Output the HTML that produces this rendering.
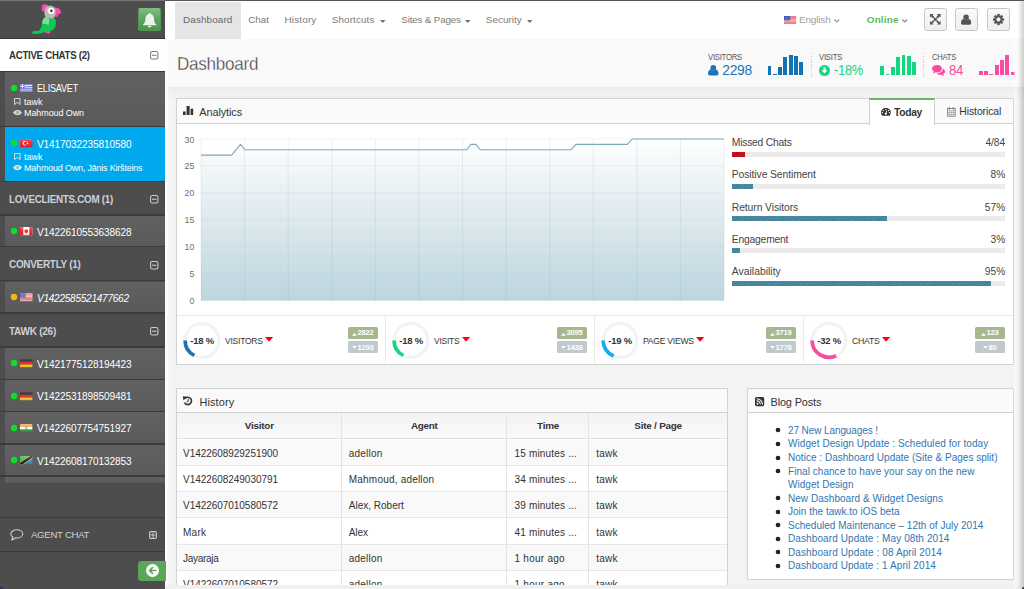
<!DOCTYPE html><html><head><meta charset="utf-8"><title>Dashboard</title><style>

*{margin:0;padding:0;box-sizing:border-box}
html,body{width:1024px;height:589px;overflow:hidden;background:#f2f3f3;font-family:"Liberation Sans",sans-serif;}
body{position:relative}
.a{position:absolute}
.t{position:absolute;white-space:nowrap;line-height:1;font-family:"Liberation Sans",sans-serif;}
svg{position:absolute;overflow:visible}

</style></head><body>
<div class="a" style="left:165px;top:0px;width:859px;height:39px;background:#fff"></div>
<div class="a" style="left:165px;top:88px;width:859px;height:501px;background:#f2f3f3"></div>
<div class="a" style="left:165px;top:39px;width:859px;height:49px;background:#f9f9fa;border-bottom:1px solid #e9e9ee"></div>
<div class="a" style="left:165px;top:88px;width:859px;height:12px;background:linear-gradient(#eeeeef,#f1f2f2)"></div>
<div class="a" style="left:165px;top:39px;width:9px;height:550px;background:linear-gradient(90deg,rgba(255,255,255,1) 0,rgba(255,255,255,.9) 1.6px,rgba(255,255,255,.2) 3.5px,rgba(255,255,255,0) 9px)"></div>
<div class="a" style="left:0px;top:0px;width:165.3px;height:589px;background:#4d4d4d"></div>
<div class="a" style="left:0px;top:0px;width:165px;height:38px;background:#4d4d4d"></div>
<div class="a" style="left:0px;top:37.6px;width:165px;height:1.2px;background:#333"></div>
<div class="a" style="left:0px;top:39px;width:165px;height:32px;background:#fff"></div>
<div class="a" style="left:0px;top:71px;width:165px;height:1px;background:#3a3a3a"></div>
<svg style="left:149.8px;top:51.3px" width="8.5" height="8.5" viewBox="0 0 8 8"><rect x=".55" y=".55" width="6.9" height="6.9" rx="1.6" fill="none" stroke="#7c7c7c" stroke-width="1"/><rect x="1.9" y="3.5" width="4.2" height="1" fill="#7c7c7c"/></svg>
<div class="a" style="left:4.5px;top:72px;width:160.5px;height:54px;background:linear-gradient(#616161,#5a5a5a)"></div>
<div class="a" style="left:0px;top:125.6px;width:165px;height:1.4px;background:#3b3b3b"></div>
<div class="a" style="left:4.5px;top:127px;width:160.5px;height:53.6px;background:#00a9ee"></div>
<div class="a" style="left:0px;top:180.5px;width:165px;height:1.4px;background:#3b3b3b"></div>
<div class="a" style="left:0px;top:182px;width:165px;height:32.5px;background:#4d4d4d"></div>
<div class="a" style="left:0px;top:214.3px;width:165px;height:1.4px;background:#3b3b3b"></div>
<div class="a" style="left:4.5px;top:215.7px;width:160.5px;height:30.5px;background:linear-gradient(#616161,#5a5a5a)"></div>
<div class="a" style="left:0px;top:246px;width:165px;height:1.4px;background:#3b3b3b"></div>
<div class="a" style="left:0px;top:247.5px;width:165px;height:32.5px;background:#4d4d4d"></div>
<div class="a" style="left:0px;top:280px;width:165px;height:1.4px;background:#3b3b3b"></div>
<div class="a" style="left:4.5px;top:281.5px;width:160.5px;height:30.8px;background:linear-gradient(#616161,#5a5a5a)"></div>
<div class="a" style="left:0px;top:312.3px;width:165px;height:1.4px;background:#3b3b3b"></div>
<div class="a" style="left:0px;top:313.6px;width:165px;height:32.5px;background:#4d4d4d"></div>
<div class="a" style="left:0px;top:346.2px;width:165px;height:1.4px;background:#3b3b3b"></div>
<div class="a" style="left:4.5px;top:347.6px;width:160.5px;height:31px;background:linear-gradient(#616161,#5a5a5a)"></div>
<div class="a" style="left:0px;top:378.6px;width:165px;height:1.4px;background:#3b3b3b"></div>
<div class="a" style="left:4.5px;top:380px;width:160.5px;height:30.8px;background:linear-gradient(#616161,#5a5a5a)"></div>
<div class="a" style="left:0px;top:410.8px;width:165px;height:1.4px;background:#3b3b3b"></div>
<div class="a" style="left:4.5px;top:412.2px;width:160.5px;height:31px;background:linear-gradient(#616161,#5a5a5a)"></div>
<div class="a" style="left:0px;top:443.2px;width:165px;height:1.4px;background:#3b3b3b"></div>
<div class="a" style="left:4.5px;top:444.6px;width:160.5px;height:30.6px;background:linear-gradient(#616161,#5a5a5a)"></div>
<div class="a" style="left:0px;top:475.2px;width:165px;height:1.4px;background:#3b3b3b"></div>
<div class="a" style="left:4.5px;top:476.6px;width:160.5px;height:6.2px;background:linear-gradient(#616161,#5a5a5a)"></div>
<div class="a" style="left:0px;top:516.6px;width:165px;height:1.2px;background:#3b3b3b"></div>
<div class="a" style="left:0px;top:550.6px;width:165px;height:1.2px;background:#3b3b3b"></div>
<svg style="left:149.8px;top:195.3px" width="8.5" height="8.5" viewBox="0 0 8 8"><rect x=".55" y=".55" width="6.9" height="6.9" rx="1.6" fill="none" stroke="#ccc" stroke-width="1"/><rect x="1.9" y="3.5" width="4.2" height="1" fill="#ccc"/></svg>
<svg style="left:149.8px;top:260.8px" width="8.5" height="8.5" viewBox="0 0 8 8"><rect x=".55" y=".55" width="6.9" height="6.9" rx="1.6" fill="none" stroke="#ccc" stroke-width="1"/><rect x="1.9" y="3.5" width="4.2" height="1" fill="#ccc"/></svg>
<svg style="left:149.8px;top:327.3px" width="8.5" height="8.5" viewBox="0 0 8 8"><rect x=".55" y=".55" width="6.9" height="6.9" rx="1.6" fill="none" stroke="#ccc" stroke-width="1"/><rect x="1.9" y="3.5" width="4.2" height="1" fill="#ccc"/></svg>
<svg width="0" height="0" style="left:0;top:0"><defs><linearGradient id="fgl" x1="0" y1="0" x2="0" y2="1"><stop offset="0" stop-color="#fff" stop-opacity=".28"/><stop offset=".5" stop-color="#fff" stop-opacity=".05"/><stop offset="1" stop-color="#000" stop-opacity=".12"/></linearGradient></defs></svg>
<svg style="left:9.5px;top:83.9px" width="8" height="8" viewBox="0 0 8 8"><circle cx="4" cy="4" r="3.2" fill="#10dc2e"/></svg>
<svg style="left:20px;top:83.80px;border-radius:1px" width="12.6" height="8.4" viewBox="0 0 12.6 8.4"><defs><clipPath id="fc880gr"><rect width="12.6" height="8.4" rx="1"/></clipPath></defs><g clip-path="url(#fc880gr)"><rect width="12.6" height="8.4" fill="#3f4fc0"/><rect y="0.93" width="12.6" height="0.93" fill="#fff"/><rect y="2.79" width="12.6" height="0.93" fill="#fff"/><rect y="4.65" width="12.6" height="0.93" fill="#fff"/><rect y="6.51" width="12.6" height="0.93" fill="#fff"/><rect width="4.7" height="4.65" fill="#3f4fc0"/><rect x="1.85" width="1" height="4.65" fill="#fff"/><rect y="1.85" width="4.7" height="1" fill="#fff"/><rect width="12.6" height="8.4" fill="url(#fgl)"/></g></svg>
<svg style="left:14px;top:97.5px" width="6.6" height="7.4" viewBox="0 0 6.6 7.4"><path d="M.55 .55 H6.05 V6.6 L3.3 4.3 L.55 6.6 Z" fill="none" stroke="#e8e8e8" stroke-width=".9" stroke-linejoin="round"/></svg>
<svg style="left:13px;top:110.4px" width="9" height="5.2" viewBox="0 0 9 5.2"><path d="M0 2.6 C1.6 .2 3.2 0 4.5 0 C5.8 0 7.4 .2 9 2.6 C7.4 5 5.8 5.2 4.5 5.2 C3.2 5.2 1.6 5 0 2.6Z" fill="#e8e8e8" fill-opacity=".88"/><circle cx="4.5" cy="2.5" r="1.5" fill="#6a6a6a" opacity=".6"/><circle cx="4" cy="2" r=".6" fill="#e8e8e8"/></svg>
<svg style="left:9.5px;top:139.2px" width="8" height="8" viewBox="0 0 8 8"><circle cx="4" cy="4" r="3.2" fill="#10dc2e"/></svg>
<svg style="left:20px;top:139.10px;border-radius:1px" width="12.6" height="8.4" viewBox="0 0 12.6 8.4"><defs><clipPath id="fc1433tr"><rect width="12.6" height="8.4" rx="1"/></clipPath></defs><g clip-path="url(#fc1433tr)"><rect width="12.6" height="8.4" fill="#e8222b"/><circle cx="5" cy="4.2" r="2.2" fill="#fff"/><circle cx="5.6" cy="4.2" r="1.75" fill="#e8222b"/><circle cx="7.6" cy="4.2" r=".8" fill="#fff"/><rect width="12.6" height="8.4" fill="url(#fgl)"/></g></svg>
<svg style="left:14px;top:152.6px" width="6.6" height="7.4" viewBox="0 0 6.6 7.4"><path d="M.55 .55 H6.05 V6.6 L3.3 4.3 L.55 6.6 Z" fill="none" stroke="#e8e8e8" stroke-width=".9" stroke-linejoin="round"/></svg>
<svg style="left:13px;top:165.3px" width="9" height="5.2" viewBox="0 0 9 5.2"><path d="M0 2.6 C1.6 .2 3.2 0 4.5 0 C5.8 0 7.4 .2 9 2.6 C7.4 5 5.8 5.2 4.5 5.2 C3.2 5.2 1.6 5 0 2.6Z" fill="#f2fbff" fill-opacity=".88"/><circle cx="4.5" cy="2.5" r="1.5" fill="#6a6a6a" opacity=".6"/><circle cx="4" cy="2" r=".6" fill="#f2fbff"/></svg>
<svg style="left:9.5px;top:227.2px" width="8" height="8" viewBox="0 0 8 8"><circle cx="4" cy="4" r="3.2" fill="#10dc2e"/></svg>
<svg style="left:20px;top:227.10px;border-radius:1px" width="12.6" height="8.4" viewBox="0 0 12.6 8.4"><defs><clipPath id="fc2313ca"><rect width="12.6" height="8.4" rx="1"/></clipPath></defs><g clip-path="url(#fc2313ca)"><rect width="12.6" height="8.4" fill="#fff"/><rect width="3.3" height="8.4" fill="#e8222b"/><rect x="9.3" width="3.3" height="8.4" fill="#e8222b"/><path d="M6.3 1.6 L7.1 3.1 L8.3 2.8 L7.8 4.6 L8.6 5 L7 5.7 L6.6 5.7 L6.6 6.9 L6 6.9 L6 5.7 L5.6 5.7 L4 5 L4.8 4.6 L4.3 2.8 L5.5 3.1 Z" fill="#e8222b"/><rect width="12.6" height="8.4" fill="url(#fgl)"/></g></svg>
<svg style="left:9.5px;top:293.3px" width="8" height="8" viewBox="0 0 8 8"><circle cx="4" cy="4" r="3.2" fill="#f5b811"/></svg>
<svg style="left:20px;top:293.30px;border-radius:1px" width="12.6" height="8.4" viewBox="0 0 12.6 8.4"><defs><clipPath id="fc2975us"><rect width="12.6" height="8.4" rx="1"/></clipPath></defs><g clip-path="url(#fc2975us)"><rect width="12.6" height="8.4" fill="#fff"/><rect y="0.00" width="12.6" height="0.646" fill="#e0303a"/><rect y="1.29" width="12.6" height="0.646" fill="#e0303a"/><rect y="2.58" width="12.6" height="0.646" fill="#e0303a"/><rect y="3.88" width="12.6" height="0.646" fill="#e0303a"/><rect y="5.17" width="12.6" height="0.646" fill="#e0303a"/><rect y="6.46" width="12.6" height="0.646" fill="#e0303a"/><rect y="7.75" width="12.6" height="0.646" fill="#e0303a"/><rect width="5.6" height="4.5" fill="#3c50b5"/><g fill="#fff" opacity=".8"><circle cx="1.2" cy="1.1" r=".35"/><circle cx="2.8" cy="1.1" r=".35"/><circle cx="4.4" cy="1.1" r=".35"/><circle cx="2" cy="2.25" r=".35"/><circle cx="3.6" cy="2.25" r=".35"/><circle cx="1.2" cy="3.4" r=".35"/><circle cx="2.8" cy="3.4" r=".35"/><circle cx="4.4" cy="3.4" r=".35"/></g><rect width="12.6" height="8.4" fill="url(#fgl)"/></g></svg>
<svg style="left:9.5px;top:359.2px" width="8" height="8" viewBox="0 0 8 8"><circle cx="4" cy="4" r="3.2" fill="#10dc2e"/></svg>
<svg style="left:20px;top:359.10px;border-radius:1px" width="12.6" height="8.4" viewBox="0 0 12.6 8.4"><defs><clipPath id="fc3633de"><rect width="12.6" height="8.4" rx="1"/></clipPath></defs><g clip-path="url(#fc3633de)"><rect width="12.6" height="2.8" fill="#0c0c0c"/><rect y="2.8" width="12.6" height="2.8" fill="#e3202a"/><rect y="5.6" width="12.6" height="2.8" fill="#f7cf1c"/><rect width="12.6" height="8.4" fill="url(#fgl)"/></g></svg>
<svg style="left:9.5px;top:391.6px" width="8" height="8" viewBox="0 0 8 8"><circle cx="4" cy="4" r="3.2" fill="#10dc2e"/></svg>
<svg style="left:20px;top:391.60px;border-radius:1px" width="12.6" height="8.4" viewBox="0 0 12.6 8.4"><defs><clipPath id="fc3958de"><rect width="12.6" height="8.4" rx="1"/></clipPath></defs><g clip-path="url(#fc3958de)"><rect width="12.6" height="2.8" fill="#0c0c0c"/><rect y="2.8" width="12.6" height="2.8" fill="#e3202a"/><rect y="5.6" width="12.6" height="2.8" fill="#f7cf1c"/><rect width="12.6" height="8.4" fill="url(#fgl)"/></g></svg>
<svg style="left:9.5px;top:423.7px" width="8" height="8" viewBox="0 0 8 8"><circle cx="4" cy="4" r="3.2" fill="#10dc2e"/></svg>
<svg style="left:20px;top:423.60px;border-radius:1px" width="12.6" height="8.4" viewBox="0 0 12.6 8.4"><defs><clipPath id="fc4278in"><rect width="12.6" height="8.4" rx="1"/></clipPath></defs><g clip-path="url(#fc4278in)"><rect width="12.6" height="2.8" fill="#f7a032"/><rect y="2.8" width="12.6" height="2.8" fill="#fff"/><rect y="5.6" width="12.6" height="2.8" fill="#2e9a3a"/><circle cx="6.3" cy="4.2" r="1" fill="none" stroke="#33409a" stroke-width=".45"/><rect width="12.6" height="8.4" fill="url(#fgl)"/></g></svg>
<svg style="left:9.5px;top:456.2px" width="8" height="8" viewBox="0 0 8 8"><circle cx="4" cy="4" r="3.2" fill="#10dc2e"/></svg>
<svg style="left:20px;top:456.10px;border-radius:1px" width="12.6" height="8.4" viewBox="0 0 12.6 8.4"><defs><clipPath id="fc4603tz"><rect width="12.6" height="8.4" rx="1"/></clipPath></defs><g clip-path="url(#fc4603tz)"><rect width="12.6" height="8.4" fill="#2a8ee0"/><path d="M0 0 H12.6 L0 8.4Z" fill="#2fb84a"/><path d="M9.2 0 H12.6 V2.3 L3.4 8.4 H0 V6.1Z" fill="#f7d11e"/><path d="M10.2 0 H12.6 V1.6 L2.4 8.4 H0 V6.8Z" fill="#222"/><rect width="12.6" height="8.4" fill="url(#fgl)"/></g></svg>
<svg style="left:9.5px;top:528.5px" width="13.5" height="12" viewBox="0 0 13.5 12"><path d="M6.9 .8 C10.2 .8 12.7 2.6 12.7 4.9 C12.7 7.2 10.2 9 6.9 9 C6.3 9 5.8 8.95 5.3 8.85 C4.4 9.9 3.2 10.6 1.6 10.9 C2.4 10.1 2.8 9.2 2.9 8.1 C1.6 7.35 .8 6.2 .8 4.9 C.8 2.6 3.6 .8 6.9 .8Z" fill="none" stroke="#cfcfcf" stroke-width="1.1" stroke-linejoin="round"/></svg>
<svg style="left:149.3px;top:530.5px" width="8" height="8" viewBox="0 0 8 8"><rect x=".6" y=".6" width="6.8" height="6.8" rx="1.4" fill="none" stroke="#ccc" stroke-width="1.1"/><rect x="1.6" y="3.5" width="4.8" height="1" fill="#ccc"/><rect x="3.5" y="1.6" width="1" height="4.8" fill="#ccc"/></svg>
<div class="a" style="left:138px;top:560.5px;width:27.5px;height:20.2px;background:#5aa65a;border-radius:3.5px 0 0 3.5px"></div>
<svg style="left:145.7px;top:564.2px" width="13" height="13" viewBox="0 0 13 13"><circle cx="6.5" cy="6.5" r="6.5" fill="#fff"/><path d="M6.4 2.6 L2.5 6.5 L6.4 10.4 L7.5 9.3 L5.55 7.35 H10.3 V5.65 H5.55 L7.5 3.7Z" fill="#5aa65a"/></svg>
<div class="a" style="left:138.4px;top:8.1px;width:22.5px;height:22.6px;background:linear-gradient(#80ba82,#5ea663 45%,#4c9551);border:1px solid #4f9a54;border-top-color:#7db980;border-radius:2px"></div>
<svg style="left:142.7px;top:13px" width="13.4" height="14.6" viewBox="0 0 12.6 13.6" opacity=".88"><path d="M6.3 0 C6.9 0 7.3 .4 7.3 .95 C9.3 1.5 10.3 3.2 10.3 5.4 C10.3 8.2 11.1 9.6 12.6 10.8 V11.4 H0 V10.8 C1.5 9.6 2.3 8.2 2.3 5.4 C2.3 3.2 3.3 1.5 5.3 .95 C5.3 .4 5.7 0 6.3 0Z" fill="#fff"/><path d="M4.6 12 H8 C8 12.95 7.25 13.6 6.3 13.6 C5.35 13.6 4.6 12.95 4.6 12Z" fill="#fff"/></svg>
<svg style="left:30px;top:2px" width="34" height="34" viewBox="30 2 34 34">
<defs><radialGradient id="hd" cx=".55" cy=".45" r=".6"><stop offset="0" stop-color="#e9e9e9"/><stop offset="1" stop-color="#9c9c9c"/></radialGradient></defs>
<path d="M41.6 11 L42.4 5 L44.6 4.3 L47.6 5 L48.6 7.2 L44.6 11.6Z" fill="#fb4fae"/>
<path d="M55 7.6 C58.4 7 61.2 10 61.2 13.6 C59.6 13.3 57.8 14 56.6 16.6 L54.6 15Z" fill="#fb4fae"/>
<path d="M55 15.2 L59.2 14.6 L57 17.2 L55 17Z" fill="#f03f9f"/>
<path d="M44.6 30.5 L48 30 L50.2 31.5 L50 33.6 L47.4 33.4 L45.4 32.4Z" fill="#fb4fae"/>
<path d="M32.2 32.4 C32.2 30.8 35 31 38.6 31 C40.6 29.5 41.4 27 42 23.5 C42.6 19.5 44.2 16 48 15.6 C53 15 56 18.4 56 23 C56 28.5 52 32.2 47 32 C44.6 31.8 42.6 33 40 33.6 C36.6 34.4 32.2 34.4 32.2 32.4Z" fill="#12c653"/>
<path d="M42.6 20.5 C43.6 17.5 46.2 16.6 48.8 17.6 C49.6 20 49.4 22.6 48.4 25.4 C47 24 45.4 23.6 42.2 24Z" fill="#8fe3a3" opacity=".85"/>
<ellipse cx="50" cy="12" rx="5.9" ry="6.6" fill="url(#hd)"/>
<path d="M44.4 13 L46.4 18.4 L50 16.8 L52.6 19 L55.2 15.4 L55 10Z" fill="#b9b9b9"/>
<circle cx="51.2" cy="10.9" r="3.1" fill="#fff"/><circle cx="51.4" cy="10.9" r="1.35" fill="#7a4a1e"/><circle cx="51.4" cy="10.9" r=".6" fill="#2a1a0a"/>
</svg>
<div class="a" style="left:175px;top:2px;width:65.5px;height:36.5px;background:#e5e5e5"></div>
<svg style="left:380px;top:19.5px" width="5.5" height="3" viewBox="0 0 5.5 3"><path d="M0 0 H5.5 L2.75 3Z" fill="#707070"/></svg>
<svg style="left:465px;top:19.5px" width="5.5" height="3" viewBox="0 0 5.5 3"><path d="M0 0 H5.5 L2.75 3Z" fill="#707070"/></svg>
<svg style="left:527px;top:19.5px" width="5.5" height="3" viewBox="0 0 5.5 3"><path d="M0 0 H5.5 L2.75 3Z" fill="#707070"/></svg>
<svg style="left:784px;top:16.3px" width="12.2" height="7.8" viewBox="0 0 12.6 8.4" preserveAspectRatio="none"><rect width="12.6" height="8.4" fill="#f6f0f0"/><rect y="0.00" width="12.6" height="0.646" fill="#e23a40"/><rect y="1.29" width="12.6" height="0.646" fill="#e23a40"/><rect y="2.58" width="12.6" height="0.646" fill="#e23a40"/><rect y="3.88" width="12.6" height="0.646" fill="#e23a40"/><rect y="5.17" width="12.6" height="0.646" fill="#e23a40"/><rect y="6.46" width="12.6" height="0.646" fill="#e23a40"/><rect y="7.75" width="12.6" height="0.646" fill="#e23a40"/><rect width="6.4" height="4.6" fill="#3f55c4"/><g fill="#fff" opacity=".7"><circle cx="1.2" cy="1.1" r=".4"/><circle cx="3.2" cy="1.1" r=".4"/><circle cx="5.2" cy="1.1" r=".4"/><circle cx="2.2" cy="2.3" r=".4"/><circle cx="4.2" cy="2.3" r=".4"/><circle cx="1.2" cy="3.5" r=".4"/><circle cx="3.2" cy="3.5" r=".4"/><circle cx="5.2" cy="3.5" r=".4"/></g></svg>
<svg style="left:833.5px;top:18.6px" width="5.6" height="3.6" viewBox="0 0 5.6 3.6"><path d="M.4 .5 L2.8 2.9 L5.2 .5" fill="none" stroke="#9a9a9a" stroke-width="1.15"/></svg>
<svg style="left:901.7px;top:18.6px" width="5.6" height="3.6" viewBox="0 0 5.6 3.6"><path d="M.4 .5 L2.8 2.9 L5.2 .5" fill="none" stroke="#8a8a8a" stroke-width="1.15"/></svg>
<div class="a" style="left:924.1px;top:8.1px;width:22.7px;height:22.5px;background:linear-gradient(#fafafa,#eeeeee);border:1px solid #c6c6c6;border-radius:2.5px"></div>
<div class="a" style="left:955.1px;top:8.1px;width:22.7px;height:22.5px;background:linear-gradient(#fafafa,#eeeeee);border:1px solid #c6c6c6;border-radius:2.5px"></div>
<div class="a" style="left:987px;top:8.1px;width:22.7px;height:22.5px;background:linear-gradient(#fafafa,#eeeeee);border:1px solid #c6c6c6;border-radius:2.5px"></div>
<svg style="left:930px;top:14.3px" width="10.6" height="10.6" viewBox="0 0 10.6 10.6"><g fill="#555"><path d="M0 0 H3.6 L2.45 1.15 L4.4 3.1 L3.1 4.4 L1.15 2.45 L0 3.6Z"/><path d="M10.6 0 V3.6 L9.45 2.45 L7.5 4.4 L6.2 3.1 L8.15 1.15 L7 0Z"/><path d="M0 10.6 V7 L1.15 8.15 L3.1 6.2 L4.4 7.5 L2.45 9.45 L3.6 10.6Z"/><path d="M10.6 10.6 H7 L8.15 9.45 L6.2 7.5 L7.5 6.2 L9.45 8.15 L10.6 7Z"/><path d="M3.4 4.5 L4.5 3.4 L5.3 4.2 L6.1 3.4 L7.2 4.5 L6.4 5.3 L7.2 6.1 L6.1 7.2 L5.3 6.4 L4.5 7.2 L3.4 6.1 L4.2 5.3Z"/></g></svg>
<svg style="left:961.4px;top:13.7px" width="10.2" height="11.2" viewBox="0 0 10 10"><circle cx="5" cy="2.7" r="2.7" fill="#555"/><path d="M0 8.4 C0 5.8 1.2 4.6 2.6 4.4 C3.3 5 4.1 5.3 5 5.3 C5.9 5.3 6.7 5 7.4 4.4 C8.8 4.6 10 5.8 10 8.4 C10 9.4 9.3 10 8.4 10 H1.6 C.7 10 0 9.4 0 8.4Z" fill="#555"/></svg>
<svg style="left:992.8px;top:13.9px" width="11" height="11" viewBox="0 0 10 10"><path d="M9.90 4.01 L9.90 5.99 L8.53 6.09 L8.27 6.73 L9.17 7.76 L7.76 9.17 L6.73 8.27 L6.09 8.53 L5.99 9.90 L4.01 9.90 L3.91 8.53 L3.27 8.27 L2.24 9.17 L0.83 7.76 L1.73 6.73 L1.47 6.09 L0.10 5.99 L0.10 4.01 L1.47 3.91 L1.73 3.27 L0.83 2.24 L2.24 0.83 L3.27 1.73 L3.91 1.47 L4.01 0.10 L5.99 0.10 L6.09 1.47 L6.73 1.73 L7.76 0.83 L9.17 2.24 L8.27 3.27 L8.53 3.91Z M5 3.05 A1.95 1.95 0 1 0 5 6.95 A1.95 1.95 0 1 0 5 3.05Z" fill="#555" fill-rule="evenodd" stroke="#555" stroke-width=".25" stroke-linejoin="round"/></svg>
<svg style="left:707.5px;top:64.8px" width="10.5" height="10.5" viewBox="0 0 10 10"><circle cx="5" cy="2.7" r="2.7" fill="#1b74b7"/><path d="M0 8.4 C0 5.8 1.2 4.6 2.6 4.4 C3.3 5 4.1 5.3 5 5.3 C5.9 5.3 6.7 5 7.4 4.4 C8.8 4.6 10 5.8 10 8.4 C10 9.4 9.3 10 8.4 10 H1.6 C.7 10 0 9.4 0 8.4Z" fill="#1b74b7"/></svg>
<svg style="left:818.8px;top:64.7px" width="11" height="11" viewBox="0 0 11 11"><circle cx="5.5" cy="5.5" r="5.5" fill="#14d580"/><path d="M4.5 2.2 H6.5 V5.2 H8.5 L5.5 8.6 L2.5 5.2 H4.5Z" fill="#f9f9fa"/></svg>
<svg style="left:931.9px;top:64.8px" width="13" height="11" viewBox="0 0 13 11"><path d="M5 0 C7.8 0 10 1.6 10 3.7 C10 5.8 7.8 7.4 5 7.4 C4.5 7.4 4.1 7.35 3.7 7.3 C2.9 8 2 8.4 .8 8.5 C1.4 8 1.8 7.4 1.9 6.6 C.7 5.9 0 4.9 0 3.7 C0 1.6 2.2 0 5 0Z" fill="#fb4aa0"/><path d="M10.9 3.6 C12.2 4.2 13 5.2 13 6.4 C13 7.5 12.3 8.4 11.2 9 C11.3 9.8 11.7 10.4 12.3 10.9 C11.1 10.8 10.1 10.4 9.4 9.7 C9 9.76 8.6 9.8 8.2 9.8 C6.7 9.8 5.4 9.3 4.5 8.4 C4.7 8.4 4.8 8.4 5 8.4 C8.3 8.4 11 6.4 11 3.8Z" fill="#fb4aa0"/></svg>
<div class="a" style="left:767.5px;top:65.9px;width:3.75px;height:8.9px;background:#1272b6"></div>
<div class="a" style="left:772.83px;top:73.7px;width:3.75px;height:1.1px;background:#1272b6"></div>
<div class="a" style="left:778.16px;top:67.0px;width:3.75px;height:7.8px;background:#1272b6"></div>
<div class="a" style="left:783.49px;top:57.0px;width:3.75px;height:17.8px;background:#1272b6"></div>
<div class="a" style="left:788.82px;top:55.4px;width:3.75px;height:19.4px;background:#1272b6"></div>
<div class="a" style="left:794.15px;top:56.2px;width:3.75px;height:18.6px;background:#1272b6"></div>
<div class="a" style="left:799.48px;top:62.3px;width:3.75px;height:12.5px;background:#1272b6"></div>
<div class="a" style="left:880.4px;top:65.9px;width:3.75px;height:8.9px;background:#14d580"></div>
<div class="a" style="left:885.73px;top:73.7px;width:3.75px;height:1.1px;background:#14d580"></div>
<div class="a" style="left:891.06px;top:67.0px;width:3.75px;height:7.8px;background:#14d580"></div>
<div class="a" style="left:896.39px;top:57.0px;width:3.75px;height:17.8px;background:#14d580"></div>
<div class="a" style="left:901.72px;top:55.4px;width:3.75px;height:19.4px;background:#14d580"></div>
<div class="a" style="left:907.05px;top:56.2px;width:3.75px;height:18.6px;background:#14d580"></div>
<div class="a" style="left:912.38px;top:62.3px;width:3.75px;height:12.5px;background:#14d580"></div>
<div class="a" style="left:978.8px;top:71.3px;width:3.75px;height:3.5px;background:#fb4aa0"></div>
<div class="a" style="left:984.13px;top:71.3px;width:3.75px;height:3.5px;background:#fb4aa0"></div>
<div class="a" style="left:989.46px;top:73.8px;width:3.75px;height:1.0px;background:#fb4aa0"></div>
<div class="a" style="left:994.79px;top:65.0px;width:3.75px;height:9.8px;background:#fb4aa0"></div>
<div class="a" style="left:1000.12px;top:60.0px;width:3.75px;height:14.8px;background:#fb4aa0"></div>
<div class="a" style="left:1005.45px;top:55.4px;width:3.75px;height:19.4px;background:#fb4aa0"></div>
<div class="a" style="left:1010.78px;top:72.0px;width:3.75px;height:2.8px;background:#fb4aa0"></div>
<div class="a" style="left:810.7px;top:53px;width:1px;height:24px;background:repeating-linear-gradient(#cfcfd4 0 1.4px,transparent 1.4px 2.8px)"></div>
<div class="a" style="left:923.2px;top:53px;width:1px;height:24px;background:repeating-linear-gradient(#cfcfd4 0 1.4px,transparent 1.4px 2.8px)"></div>
<div class="a" style="left:175.9px;top:98px;width:838.2px;height:267px;background:#fff;border:1px solid #d2d2d2;"></div>
<div class="a" style="left:176.9px;top:99px;width:836.2px;height:24.9px;background:#fafafa;border-bottom:1px solid #d0d0d0"></div>
<div class="a" style="left:869px;top:98px;width:65.5px;height:26.9px;background:#fff;border-left:1px solid #d0d0d0;border-right:1px solid #d0d0d0;border-top:2px solid #6fb06f"></div>
<div class="a" style="left:934.5px;top:99px;width:78.6px;height:24.9px;background:#fafafa;border-bottom:1px solid #d0d0d0"></div>
<svg style="left:183.2px;top:105.8px" width="10.2" height="9" viewBox="0 0 10.2 9"><g fill="#333"><rect x="0" y="5.5" width="2.6" height="3.5"/><rect x="3.6" y="0" width="3" height="9"/><rect x="7.6" y="2.7" width="2.6" height="6.3"/></g></svg>
<svg style="left:880.9px;top:108.2px" width="9.8" height="7.7" viewBox="0 0 10 8.6" preserveAspectRatio="none"><path d="M5 0 C7.8 0 10 2.2 10 5 C10 6.3 9.5 7.6 8.7 8.6 H1.3 C.5 7.6 0 6.3 0 5 C0 2.2 2.2 0 5 0Z" fill="#333"/><g fill="#fff"><circle cx="5" cy="1.7" r=".7"/><circle cx="2.3" cy="2.8" r=".7"/><circle cx="7.7" cy="2.8" r=".7"/><circle cx="1.4" cy="5.3" r=".7"/><circle cx="8.6" cy="5.3" r=".7"/><path d="M5.7 2.8 L6.4 3 L5.6 5.6 A1.1 1.1 0 1 1 4.7 5.4Z"/></g></svg>
<svg style="left:947px;top:106.6px" width="8.6" height="9.6" viewBox="0 0 8.6 9.6"><rect x=".4" y="1.5" width="7.8" height="7.7" fill="none" stroke="#777" stroke-width=".8"/><g stroke="#999" stroke-width=".6"><path d="M.4 3.6 H8.2 M.4 5.5 H8.2 M.4 7.4 H8.2 M2.4 3.6 V9.2 M4.3 3.6 V9.2 M6.2 3.6 V9.2"/></g><rect x="1.9" y="0" width="1" height="2.6" fill="#777"/><rect x="5.7" y="0" width="1" height="2.6" fill="#777"/></svg>
<svg style="left:201.25px;top:138.75px" width="523.05" height="161.45" viewBox="0 0 523.05 161.45"><defs><linearGradient id="cg" x1="0" y1="0" x2="0" y2="1"><stop offset="0" stop-color="#ffffff"/><stop offset=".12" stop-color="#f6f9fa"/><stop offset="1" stop-color="#bcd5de"/></linearGradient></defs>
<path d="M0.00 16.15 L30.50 16.15 L39.50 5.38 L43.75 10.76 L265.75 10.76 L269.95 5.38 L274.95 5.38 L279.25 10.76 L369.95 10.76 L375.05 5.38 L426.25 5.38 L431.25 0.00 L523.05 0.00 L523.05 161.45 L0 161.45Z" fill="url(#cg)"/><path d="M0.00 0 V161.45" stroke="#5f7f8c" stroke-opacity=".11" stroke-width="1"/><path d="M43.59 0 V161.45" stroke="#5f7f8c" stroke-opacity=".11" stroke-width="1"/><path d="M87.17 0 V161.45" stroke="#5f7f8c" stroke-opacity=".11" stroke-width="1"/><path d="M130.76 0 V161.45" stroke="#5f7f8c" stroke-opacity=".11" stroke-width="1"/><path d="M174.35 0 V161.45" stroke="#5f7f8c" stroke-opacity=".11" stroke-width="1"/><path d="M217.94 0 V161.45" stroke="#5f7f8c" stroke-opacity=".11" stroke-width="1"/><path d="M261.52 0 V161.45" stroke="#5f7f8c" stroke-opacity=".11" stroke-width="1"/><path d="M305.11 0 V161.45" stroke="#5f7f8c" stroke-opacity=".11" stroke-width="1"/><path d="M348.70 0 V161.45" stroke="#5f7f8c" stroke-opacity=".11" stroke-width="1"/><path d="M392.29 0 V161.45" stroke="#5f7f8c" stroke-opacity=".11" stroke-width="1"/><path d="M435.88 0 V161.45" stroke="#5f7f8c" stroke-opacity=".11" stroke-width="1"/><path d="M479.46 0 V161.45" stroke="#5f7f8c" stroke-opacity=".11" stroke-width="1"/><path d="M523.05 0 V161.45" stroke="#5f7f8c" stroke-opacity=".11" stroke-width="1"/><path d="M0 0.00 H523.05" stroke="#5f7f8c" stroke-opacity=".08" stroke-width="1"/><path d="M0 26.91 H523.05" stroke="#5f7f8c" stroke-opacity=".08" stroke-width="1"/><path d="M0 53.82 H523.05" stroke="#5f7f8c" stroke-opacity=".08" stroke-width="1"/><path d="M0 80.72 H523.05" stroke="#5f7f8c" stroke-opacity=".08" stroke-width="1"/><path d="M0 107.63 H523.05" stroke="#5f7f8c" stroke-opacity=".08" stroke-width="1"/><path d="M0 134.54 H523.05" stroke="#5f7f8c" stroke-opacity=".08" stroke-width="1"/><path d="M0 161.45 H523.05" stroke="#5f7f8c" stroke-opacity=".08" stroke-width="1"/>
<path d="M0.00 16.15 L30.50 16.15 L39.50 5.38 L43.75 10.76 L265.75 10.76 L269.95 5.38 L274.95 5.38 L279.25 10.76 L369.95 10.76 L375.05 5.38 L426.25 5.38 L431.25 0.00 L523.05 0.00" fill="none" stroke="#7ba8ba" stroke-width="1.1" stroke-linejoin="round"/></svg>
<div class="a" style="left:731.8px;top:151.8px;width:273.2px;height:5px;background:#ebebeb"></div>
<div class="a" style="left:731.8px;top:151.8px;width:13.11px;height:5px;background:repeating-linear-gradient(135deg,rgba(255,255,255,.09) 0 1px,rgba(255,255,255,0) 1px 2.5px),#bd0a14"></div>
<div class="a" style="left:731.8px;top:184.0px;width:273.2px;height:5px;background:#ebebeb"></div>
<div class="a" style="left:731.8px;top:184.0px;width:21.58px;height:5px;background:repeating-linear-gradient(135deg,rgba(255,255,255,.09) 0 1px,rgba(255,255,255,0) 1px 2.5px),#42839b"></div>
<div class="a" style="left:731.8px;top:216.2px;width:273.2px;height:5px;background:#ebebeb"></div>
<div class="a" style="left:731.8px;top:216.2px;width:155.18px;height:5px;background:repeating-linear-gradient(135deg,rgba(255,255,255,.09) 0 1px,rgba(255,255,255,0) 1px 2.5px),#42839b"></div>
<div class="a" style="left:731.8px;top:248.4px;width:273.2px;height:5px;background:#ebebeb"></div>
<div class="a" style="left:731.8px;top:248.4px;width:7.92px;height:5px;background:repeating-linear-gradient(135deg,rgba(255,255,255,.09) 0 1px,rgba(255,255,255,0) 1px 2.5px),#42839b"></div>
<div class="a" style="left:731.8px;top:280.6px;width:273.2px;height:5px;background:#ebebeb"></div>
<div class="a" style="left:731.8px;top:280.6px;width:259.54px;height:5px;background:repeating-linear-gradient(135deg,rgba(255,255,255,.09) 0 1px,rgba(255,255,255,0) 1px 2.5px),#42839b"></div>
<div class="a" style="left:176.9px;top:315px;width:835.6px;height:1px;background:#e8e8e8"></div>
<svg style="left:0;top:0" width="1024" height="589"><circle cx="202.0" cy="340.4" r="16.9" fill="none" stroke="#f3f3f3" stroke-width="3.3"/><path d="M185.10 340.40 A16.9 16.9 0 0 0 194.33 355.46" fill="none" stroke="#1b74b7" stroke-width="3.7"/></svg>
<svg style="left:265.20px;top:336.8px" width="8.2" height="4.7" viewBox="0 0 8.2 4.7"><path d="M0 0 H8.2 L4.1 4.7Z" fill="#f00"/></svg>
<div class="a" style="left:348.0px;top:327px;width:30px;height:11.7px;background:#a6b98e;border-radius:1.5px"></div>
<div class="a" style="left:348.0px;top:341.4px;width:30px;height:11.9px;background:#c0cacd;border-radius:1.5px"></div>
<div class="a" style="left:384.6px;top:316px;width:1px;height:48px;background:#ebebeb"></div>
<svg style="left:0;top:0" width="1024" height="589"><circle cx="411.0" cy="340.4" r="16.9" fill="none" stroke="#f3f3f3" stroke-width="3.3"/><path d="M394.10 340.40 A16.9 16.9 0 0 0 403.33 355.46" fill="none" stroke="#14d580" stroke-width="3.7"/></svg>
<svg style="left:461.80px;top:336.8px" width="8.2" height="4.7" viewBox="0 0 8.2 4.7"><path d="M0 0 H8.2 L4.1 4.7Z" fill="#f00"/></svg>
<div class="a" style="left:557.0px;top:327px;width:30px;height:11.7px;background:#a6b98e;border-radius:1.5px"></div>
<div class="a" style="left:557.0px;top:341.4px;width:30px;height:11.9px;background:#c0cacd;border-radius:1.5px"></div>
<div class="a" style="left:593.6px;top:316px;width:1px;height:48px;background:#ebebeb"></div>
<svg style="left:0;top:0" width="1024" height="589"><circle cx="620.0" cy="340.4" r="16.9" fill="none" stroke="#f3f3f3" stroke-width="3.3"/><path d="M603.10 340.40 A16.9 16.9 0 0 0 613.67 356.07" fill="none" stroke="#19a9ee" stroke-width="3.7"/></svg>
<svg style="left:696.30px;top:336.8px" width="8.2" height="4.7" viewBox="0 0 8.2 4.7"><path d="M0 0 H8.2 L4.1 4.7Z" fill="#f00"/></svg>
<div class="a" style="left:766.0px;top:327px;width:30px;height:11.7px;background:#a6b98e;border-radius:1.5px"></div>
<div class="a" style="left:766.0px;top:341.4px;width:30px;height:11.9px;background:#c0cacd;border-radius:1.5px"></div>
<div class="a" style="left:802.6px;top:316px;width:1px;height:48px;background:#ebebeb"></div>
<svg style="left:0;top:0" width="1024" height="589"><circle cx="829.0" cy="340.4" r="16.9" fill="none" stroke="#f3f3f3" stroke-width="3.3"/><path d="M812.10 340.40 A16.9 16.9 0 0 0 836.14 355.72" fill="none" stroke="#fb4aa0" stroke-width="3.7"/></svg>
<svg style="left:882.10px;top:336.8px" width="8.2" height="4.7" viewBox="0 0 8.2 4.7"><path d="M0 0 H8.2 L4.1 4.7Z" fill="#f00"/></svg>
<div class="a" style="left:975.0px;top:327px;width:30px;height:11.7px;background:#a6b98e;border-radius:1.5px"></div>
<div class="a" style="left:975.0px;top:341.4px;width:30px;height:11.9px;background:#c0cacd;border-radius:1.5px"></div>
<div class="a" style="left:175.9px;top:388px;width:552px;height:205px;background:#fff;border:1px solid #d2d2d2;"></div>
<div class="a" style="left:176.9px;top:389px;width:550px;height:24.3px;background:#fafafa;border-bottom:1px solid #d0d0d0"></div>
<svg style="left:183px;top:396.4px" width="9.6" height="9.6" viewBox="0 0 9.6 9.6"><path d="M2.1 2.4 A3.7 3.7 0 1 1 1.5 6.6" fill="none" stroke="#333" stroke-width="1.6"/><path d="M-.2 .2 L4 .7 L.5 4.4Z" fill="#333"/><path d="M5.2 3 V5.4 L3.6 6.2" fill="none" stroke="#333" stroke-width="1"/></svg>
<div class="a" style="left:176.9px;top:413.3px;width:550px;height:26.2px;background:linear-gradient(#f3f3f3,#fafafa);border-bottom:1px solid #e0e0e0"></div>
<div class="a" style="left:176.9px;top:439.5px;width:550px;height:26.27px;background:#f9f9f9;border-bottom:1px solid #e7e7e7"></div>
<div class="a" style="left:176.9px;top:465.77px;width:550px;height:26.27px;background:#fff;border-bottom:1px solid #e7e7e7"></div>
<div class="a" style="left:176.9px;top:492.04px;width:550px;height:26.27px;background:#f9f9f9;border-bottom:1px solid #e7e7e7"></div>
<div class="a" style="left:176.9px;top:518.31px;width:550px;height:26.27px;background:#fff;border-bottom:1px solid #e7e7e7"></div>
<div class="a" style="left:176.9px;top:544.58px;width:550px;height:26.27px;background:#f9f9f9;border-bottom:1px solid #e7e7e7"></div>
<div class="a" style="left:176.9px;top:570.85px;width:550px;height:26.27px;background:#fff;border-bottom:1px solid #e7e7e7"></div>
<div class="a" style="left:340.8px;top:413px;width:1px;height:180px;background:#e4e4e4"></div>
<div class="a" style="left:506.1px;top:413px;width:1px;height:180px;background:#e4e4e4"></div>
<div class="a" style="left:588.1px;top:413px;width:1px;height:180px;background:#e4e4e4"></div>
<div class="a" style="left:747.3px;top:388px;width:266.4px;height:191.5px;background:#fff;border:1px solid #d2d2d2;"></div>
<div class="a" style="left:748.3px;top:389px;width:264.4px;height:24.3px;background:#fafafa;border-bottom:1px solid #d0d0d0"></div>
<svg style="left:755px;top:396.6px" width="9.2" height="9.2" viewBox="0 0 9.2 9.2"><rect width="9.2" height="9.2" rx="1.6" fill="#333"/><circle cx="2.5" cy="6.7" r=".95" fill="#fff"/><path d="M1.6 3.9 A3.7 3.7 0 0 1 5.3 7.6 M1.6 1.7 A5.9 5.9 0 0 1 7.5 7.6" fill="none" stroke="#fff" stroke-width="1.05"/></svg>
<svg style="left:773.7px;top:426.40px" width="8" height="8" viewBox="0 0 8 8"><circle cx="4" cy="4" r="2.35" fill="#222"/></svg>
<svg style="left:773.7px;top:439.95px" width="8" height="8" viewBox="0 0 8 8"><circle cx="4" cy="4" r="2.35" fill="#222"/></svg>
<svg style="left:773.7px;top:453.50px" width="8" height="8" viewBox="0 0 8 8"><circle cx="4" cy="4" r="2.35" fill="#222"/></svg>
<svg style="left:773.7px;top:467.05px" width="8" height="8" viewBox="0 0 8 8"><circle cx="4" cy="4" r="2.35" fill="#222"/></svg>
<svg style="left:773.7px;top:494.15px" width="8" height="8" viewBox="0 0 8 8"><circle cx="4" cy="4" r="2.35" fill="#222"/></svg>
<svg style="left:773.7px;top:507.70px" width="8" height="8" viewBox="0 0 8 8"><circle cx="4" cy="4" r="2.35" fill="#222"/></svg>
<svg style="left:773.7px;top:521.25px" width="8" height="8" viewBox="0 0 8 8"><circle cx="4" cy="4" r="2.35" fill="#222"/></svg>
<svg style="left:773.7px;top:534.80px" width="8" height="8" viewBox="0 0 8 8"><circle cx="4" cy="4" r="2.35" fill="#222"/></svg>
<svg style="left:773.7px;top:548.35px" width="8" height="8" viewBox="0 0 8 8"><circle cx="4" cy="4" r="2.35" fill="#222"/></svg>
<svg style="left:773.7px;top:561.90px" width="8" height="8" viewBox="0 0 8 8"><circle cx="4" cy="4" r="2.35" fill="#222"/></svg>
<div class="a" style="left:165px;top:585px;width:859px;height:4px;background:#f0f0f0;z-index:5"></div>
<div class="a" style="left:0px;top:0px;width:165px;height:1.2px;background:#747474"></div>
<div class="a" style="left:165px;top:0px;width:859px;height:1.2px;background:#565656"></div>
<div class="a" style="left:1013px;top:1px;width:11px;height:588px;z-index:6;background:linear-gradient(90deg,rgba(255,255,255,0) 0,rgba(255,255,255,.4) 12%,rgba(255,255,255,.3) 30%,rgba(0,0,0,0) 42%,rgba(0,0,0,.07) 65%,rgba(0,0,0,.18) 100%)"></div>
<div class="a" style="left:1021.5px;top:586.5px;width:2.5px;height:2.5px;background:#1b2a3a;border-radius:2.5px 0 0 0;z-index:7"></div>
<div class="a" style="left:0px;top:587px;width:2.5px;height:2px;background:#24364d;border-radius:0 2.5px 0 0;z-index:7"></div>
<span class="t" style="top:51.37px;font-size:10.1px;left:8.50px;font-weight:700;color:#333;letter-spacing:-0.280px;transform:scaleX(0.9562);transform-origin:0 50%;">ACTIVE CHATS (2)</span>
<span class="t" style="top:84.37px;font-size:10.1px;left:37.00px;color:#fff;letter-spacing:-0.280px;transform:scaleX(0.9059);transform-origin:0 50%;">ELISAVET</span>
<span class="t" style="top:97.60px;font-size:9px;left:24.00px;color:#fff;">tawk</span>
<span class="t" style="top:109.00px;font-size:9px;left:24.00px;color:#fff;letter-spacing:-0.094px;">Mahmoud Own</span>
<span class="t" style="top:139.67px;font-size:10.1px;left:37.00px;color:#fff;letter-spacing:-0.121px;">V1417032235810580</span>
<span class="t" style="top:152.70px;font-size:9px;left:24.00px;color:#fff;">tawk</span>
<span class="t" style="top:163.90px;font-size:9px;left:24.00px;color:#fff;letter-spacing:-0.202px;">Mahmoud Own, J&#257;nis Kir&#353;teins</span>
<span class="t" style="top:194.57px;font-size:10.1px;left:8.50px;font-weight:700;color:#cfd0d8;letter-spacing:-0.280px;transform:scaleX(0.9735);transform-origin:0 50%;">LOVECLIENTS.COM (1)</span>
<span class="t" style="top:227.67px;font-size:10.1px;left:37.00px;color:#fff;letter-spacing:-0.121px;">V1422610553638628</span>
<span class="t" style="top:260.37px;font-size:10.1px;left:8.50px;font-weight:700;color:#cfd0d8;letter-spacing:-0.280px;transform:scaleX(0.9843);transform-origin:0 50%;">CONVERTLY (1)</span>
<span class="t" style="top:293.87px;font-size:10.1px;left:37.00px;color:#fff;letter-spacing:-0.280px;font-style:italic;">V1422585521477662</span>
<span class="t" style="top:326.57px;font-size:10.1px;left:8.50px;font-weight:700;color:#cfd0d8;letter-spacing:-0.280px;transform:scaleX(0.9955);transform-origin:0 50%;">TAWK (26)</span>
<span class="t" style="top:359.67px;font-size:10.1px;left:37.00px;color:#fff;letter-spacing:-0.121px;">V1421775128194423</span>
<span class="t" style="top:392.17px;font-size:10.1px;left:37.00px;color:#fff;letter-spacing:-0.121px;">V1422531898509481</span>
<span class="t" style="top:424.17px;font-size:10.1px;left:37.00px;color:#fff;letter-spacing:-0.121px;">V1422607754751927</span>
<span class="t" style="top:456.67px;font-size:10.1px;left:37.00px;color:#fff;letter-spacing:-0.121px;">V1422608170132853</span>
<span class="t" style="top:530.06px;font-size:9.9px;left:31.30px;color:#d2d2d2;letter-spacing:-0.280px;transform:scaleX(0.9711);transform-origin:0 50%;">AGENT CHAT</span>
<span class="t" style="top:14.86px;font-size:9.9px;left:183.00px;color:#686868;letter-spacing:0.132px;">Dashboard</span>
<span class="t" style="top:14.86px;font-size:9.9px;left:248.30px;color:#7b7b7b;letter-spacing:-0.090px;">Chat</span>
<span class="t" style="top:14.86px;font-size:9.9px;left:284.50px;color:#7b7b7b;letter-spacing:0.181px;">History</span>
<span class="t" style="top:14.86px;font-size:9.9px;left:331.80px;color:#7b7b7b;letter-spacing:0.109px;">Shortcuts</span>
<span class="t" style="top:14.86px;font-size:9.9px;left:401.30px;color:#7b7b7b;letter-spacing:-0.195px;">Sites &amp; Pages</span>
<span class="t" style="top:14.86px;font-size:9.9px;left:485.80px;color:#7b7b7b;letter-spacing:0.041px;">Security</span>
<span class="t" style="top:14.86px;font-size:9.9px;left:799.00px;color:#9e9e9e;letter-spacing:-0.127px;">English</span>
<span class="t" style="top:14.86px;font-size:9.9px;left:866.80px;font-weight:700;color:#5cb85c;letter-spacing:0.178px;">Online</span>
<span class="t" style="top:55.70px;font-size:17.8px;left:176.90px;color:#404045;letter-spacing:-0.280px;transform:scaleX(0.9612);transform-origin:0 50%;-webkit-text-stroke:.32px #f9f9fa;">Dashboard</span>
<span class="t" style="top:52.80px;font-size:8.6px;left:707.50px;color:#555;letter-spacing:-0.280px;transform:scaleX(0.8985);transform-origin:0 50%;">VISITORS</span>
<span class="t" style="top:52.80px;font-size:8.6px;left:818.80px;color:#555;letter-spacing:-0.280px;transform:scaleX(0.9040);transform-origin:0 50%;">VISITS</span>
<span class="t" style="top:52.80px;font-size:8.6px;left:931.90px;color:#555;letter-spacing:-0.280px;transform:scaleX(0.8893);transform-origin:0 50%;">CHATS</span>
<span class="t" style="top:63.76px;font-size:13.8px;left:722.30px;color:#1b74b7;letter-spacing:-0.276px;">2298</span>
<span class="t" style="top:63.76px;font-size:13.8px;left:834.40px;color:#14d580;letter-spacing:-0.280px;transform:scaleX(0.9325);transform-origin:0 50%;">-18%</span>
<span class="t" style="top:63.76px;font-size:13.8px;left:949.00px;color:#fb4aa0;letter-spacing:-0.280px;transform:scaleX(0.9527);transform-origin:0 50%;">84</span>
<span class="t" style="top:106.68px;font-size:10.9px;left:199.30px;color:#333;letter-spacing:-0.099px;">Analytics</span>
<span class="t" style="top:107.52px;font-size:10.4px;left:893.80px;font-weight:700;color:#333;letter-spacing:-0.280px;transform:scaleX(0.9849);transform-origin:0 50%;">Today</span>
<span class="t" style="top:107.32px;font-size:10.4px;left:959.30px;color:#333;letter-spacing:-0.073px;">Historical</span>
<span class="t" style="top:135.55px;font-size:8.8px;right:829.70px;color:#6e6e6e;">30</span>
<span class="t" style="top:162.46px;font-size:8.8px;right:829.70px;color:#6e6e6e;">25</span>
<span class="t" style="top:189.37px;font-size:8.8px;right:829.70px;color:#6e6e6e;">20</span>
<span class="t" style="top:216.28px;font-size:8.8px;right:829.70px;color:#6e6e6e;">15</span>
<span class="t" style="top:243.18px;font-size:8.8px;right:829.70px;color:#6e6e6e;">10</span>
<span class="t" style="top:270.09px;font-size:8.8px;right:829.70px;color:#6e6e6e;">5</span>
<span class="t" style="top:297.00px;font-size:8.8px;right:829.70px;color:#6e6e6e;">0</span>
<span class="t" style="top:138.17px;font-size:10.3px;left:731.80px;color:#444;letter-spacing:-0.215px;">Missed Chats</span>
<span class="t" style="top:138.22px;font-size:10.2px;right:18.80px;color:#444;">4/84</span>
<span class="t" style="top:170.37px;font-size:10.3px;left:731.80px;color:#444;letter-spacing:-0.071px;">Positive Sentiment</span>
<span class="t" style="top:170.42px;font-size:10.2px;right:18.80px;color:#444;">8%</span>
<span class="t" style="top:202.57px;font-size:10.3px;left:731.80px;color:#444;letter-spacing:-0.070px;">Return Visitors</span>
<span class="t" style="top:202.62px;font-size:10.2px;right:18.80px;color:#444;">57%</span>
<span class="t" style="top:234.77px;font-size:10.3px;left:731.80px;color:#444;letter-spacing:-0.191px;">Engagement</span>
<span class="t" style="top:234.82px;font-size:10.2px;right:18.80px;color:#444;">3%</span>
<span class="t" style="top:266.97px;font-size:10.3px;left:731.80px;color:#444;letter-spacing:0.044px;">Availability</span>
<span class="t" style="top:267.02px;font-size:10.2px;right:18.80px;color:#444;">95%</span>
<span class="t" style="top:336.46px;font-size:9.5px;left:190.20px;font-weight:700;color:#333;letter-spacing:-0.206px;">-18 %</span>
<span class="t" style="top:336.01px;font-size:9.6px;left:225.30px;color:#333;letter-spacing:-0.280px;transform:scaleX(0.8898);transform-origin:0 50%;">VISITORS</span>
<span class="t" style="top:329.19px;font-size:7.6px;left:163.00px;width:400px;text-align:center;font-weight:700;color:#fff;letter-spacing:-.2px;"><svg width="4.8" height="2.7" viewBox="0 0 4.8 2.7" style="position:static;display:inline-block;vertical-align:0px;margin-right:.3px"><path d="M0 2.7 L2.4 0 L4.8 2.7Z" fill="#fff"/></svg>2822</span>
<span class="t" style="top:343.89px;font-size:7.6px;left:163.00px;width:400px;text-align:center;font-weight:700;color:#fff;letter-spacing:-.2px;"><svg width="4.8" height="2.7" viewBox="0 0 4.8 2.7" style="position:static;display:inline-block;vertical-align:1.6px;margin-right:.3px"><path d="M0 0 H4.8 L2.4 2.7Z" fill="#fff"/></svg>1293</span>
<span class="t" style="top:336.46px;font-size:9.5px;left:399.20px;font-weight:700;color:#333;letter-spacing:-0.206px;">-18 %</span>
<span class="t" style="top:336.01px;font-size:9.6px;left:434.30px;color:#333;letter-spacing:-0.280px;transform:scaleX(0.8812);transform-origin:0 50%;">VISITS</span>
<span class="t" style="top:329.19px;font-size:7.6px;left:372.00px;width:400px;text-align:center;font-weight:700;color:#fff;letter-spacing:-.2px;"><svg width="4.8" height="2.7" viewBox="0 0 4.8 2.7" style="position:static;display:inline-block;vertical-align:0px;margin-right:.3px"><path d="M0 2.7 L2.4 0 L4.8 2.7Z" fill="#fff"/></svg>3095</span>
<span class="t" style="top:343.89px;font-size:7.6px;left:372.00px;width:400px;text-align:center;font-weight:700;color:#fff;letter-spacing:-.2px;"><svg width="4.8" height="2.7" viewBox="0 0 4.8 2.7" style="position:static;display:inline-block;vertical-align:1.6px;margin-right:.3px"><path d="M0 0 H4.8 L2.4 2.7Z" fill="#fff"/></svg>1438</span>
<span class="t" style="top:336.46px;font-size:9.5px;left:608.20px;font-weight:700;color:#333;letter-spacing:-0.206px;">-19 %</span>
<span class="t" style="top:336.01px;font-size:9.6px;left:643.30px;color:#333;letter-spacing:-0.280px;transform:scaleX(0.8955);transform-origin:0 50%;">PAGE VIEWS</span>
<span class="t" style="top:329.19px;font-size:7.6px;left:581.00px;width:400px;text-align:center;font-weight:700;color:#fff;letter-spacing:-.2px;"><svg width="4.8" height="2.7" viewBox="0 0 4.8 2.7" style="position:static;display:inline-block;vertical-align:0px;margin-right:.3px"><path d="M0 2.7 L2.4 0 L4.8 2.7Z" fill="#fff"/></svg>3719</span>
<span class="t" style="top:343.89px;font-size:7.6px;left:581.00px;width:400px;text-align:center;font-weight:700;color:#fff;letter-spacing:-.2px;"><svg width="4.8" height="2.7" viewBox="0 0 4.8 2.7" style="position:static;display:inline-block;vertical-align:1.6px;margin-right:.3px"><path d="M0 0 H4.8 L2.4 2.7Z" fill="#fff"/></svg>1778</span>
<span class="t" style="top:336.46px;font-size:9.5px;left:817.20px;font-weight:700;color:#333;letter-spacing:-0.206px;">-32 %</span>
<span class="t" style="top:336.01px;font-size:9.6px;left:852.30px;color:#333;letter-spacing:-0.280px;transform:scaleX(0.9075);transform-origin:0 50%;">CHATS</span>
<span class="t" style="top:329.19px;font-size:7.6px;left:790.00px;width:400px;text-align:center;font-weight:700;color:#fff;letter-spacing:-.2px;"><svg width="4.8" height="2.7" viewBox="0 0 4.8 2.7" style="position:static;display:inline-block;vertical-align:0px;margin-right:.3px"><path d="M0 2.7 L2.4 0 L4.8 2.7Z" fill="#fff"/></svg>123</span>
<span class="t" style="top:343.89px;font-size:7.6px;left:790.00px;width:400px;text-align:center;font-weight:700;color:#fff;letter-spacing:-.2px;"><svg width="4.8" height="2.7" viewBox="0 0 4.8 2.7" style="position:static;display:inline-block;vertical-align:1.6px;margin-right:.3px"><path d="M0 0 H4.8 L2.4 2.7Z" fill="#fff"/></svg>80</span>
<span class="t" style="top:396.58px;font-size:10.9px;left:199.50px;color:#333;letter-spacing:0.130px;">History</span>
<span class="t" style="top:421.46px;font-size:9.9px;left:244.80px;font-weight:700;color:#333;letter-spacing:-0.223px;">Visitor</span>
<span class="t" style="top:421.46px;font-size:9.9px;left:410.80px;font-weight:700;color:#333;letter-spacing:-0.280px;transform:scaleX(0.9968);transform-origin:0 50%;">Agent</span>
<span class="t" style="top:421.46px;font-size:9.9px;left:537.00px;font-weight:700;color:#333;letter-spacing:-0.219px;">Time</span>
<span class="t" style="top:421.46px;font-size:9.9px;left:634.30px;font-weight:700;color:#333;letter-spacing:-0.214px;">Site / Page</span>
<span class="t" style="top:448.72px;font-size:10px;left:183.00px;color:#333;letter-spacing:-0.039px;">V1422608929251900</span>
<span class="t" style="top:448.72px;font-size:10px;left:348.80px;color:#333;letter-spacing:0.205px;">adellon</span>
<span class="t" style="top:448.72px;font-size:10px;left:514.50px;color:#333;letter-spacing:0.176px;">15 minutes ...</span>
<span class="t" style="top:448.72px;font-size:10px;left:596.30px;color:#333;letter-spacing:.2px;">tawk</span>
<span class="t" style="top:474.99px;font-size:10px;left:183.00px;color:#333;letter-spacing:-0.039px;">V1422608249030791</span>
<span class="t" style="top:474.99px;font-size:10px;left:348.80px;color:#333;letter-spacing:0.201px;">Mahmoud, adellon</span>
<span class="t" style="top:474.99px;font-size:10px;left:514.50px;color:#333;letter-spacing:0.176px;">34 minutes ...</span>
<span class="t" style="top:474.99px;font-size:10px;left:596.30px;color:#333;letter-spacing:.2px;">tawk</span>
<span class="t" style="top:501.26px;font-size:10px;left:183.00px;color:#333;letter-spacing:-0.039px;">V1422607010580572</span>
<span class="t" style="top:501.26px;font-size:10px;left:348.80px;color:#333;">Alex, Robert</span>
<span class="t" style="top:501.26px;font-size:10px;left:514.50px;color:#333;letter-spacing:0.176px;">39 minutes ...</span>
<span class="t" style="top:501.26px;font-size:10px;left:596.30px;color:#333;letter-spacing:.2px;">tawk</span>
<span class="t" style="top:527.52px;font-size:10px;left:183.00px;color:#333;letter-spacing:0.291px;">Mark</span>
<span class="t" style="top:527.52px;font-size:10px;left:348.80px;color:#333;letter-spacing:-0.113px;">Alex</span>
<span class="t" style="top:527.52px;font-size:10px;left:514.50px;color:#333;letter-spacing:0.176px;">41 minutes ...</span>
<span class="t" style="top:527.52px;font-size:10px;left:596.30px;color:#333;letter-spacing:.2px;">tawk</span>
<span class="t" style="top:553.79px;font-size:10px;left:183.00px;color:#333;letter-spacing:-0.277px;">Jayaraja</span>
<span class="t" style="top:553.79px;font-size:10px;left:348.80px;color:#333;letter-spacing:0.205px;">adellon</span>
<span class="t" style="top:553.79px;font-size:10px;left:514.50px;color:#333;letter-spacing:.25px;">1 hour ago</span>
<span class="t" style="top:553.79px;font-size:10px;left:596.30px;color:#333;letter-spacing:.2px;">tawk</span>
<span class="t" style="top:580.06px;font-size:10px;left:183.00px;color:#333;letter-spacing:-0.039px;">V1422607010580572</span>
<span class="t" style="top:580.06px;font-size:10px;left:348.80px;color:#333;letter-spacing:0.205px;">adellon</span>
<span class="t" style="top:580.06px;font-size:10px;left:514.50px;color:#333;letter-spacing:.25px;">1 hour ago</span>
<span class="t" style="top:580.06px;font-size:10px;left:596.30px;color:#333;letter-spacing:.2px;">tawk</span>
<span class="t" style="top:396.58px;font-size:10.9px;left:770.50px;color:#333;letter-spacing:-0.126px;">Blog Posts</span>
<span class="t" style="top:425.92px;font-size:10px;left:788.00px;color:#3276b1;letter-spacing:-0.096px;">27 New Languages !</span>
<span class="t" style="top:439.47px;font-size:10px;left:788.00px;color:#3276b1;letter-spacing:0.070px;">Widget Design Update : Scheduled for today</span>
<span class="t" style="top:453.02px;font-size:10px;left:788.00px;color:#3276b1;letter-spacing:0.023px;">Notice : Dashboard Update (Site &amp; Pages split)</span>
<span class="t" style="top:466.56px;font-size:10px;left:788.00px;color:#3276b1;letter-spacing:0.048px;">Final chance to have your say on the new</span>
<span class="t" style="top:480.12px;font-size:10px;left:788.00px;color:#3276b1;letter-spacing:0.036px;">Widget Design</span>
<span class="t" style="top:493.67px;font-size:10px;left:788.00px;color:#3276b1;letter-spacing:0.034px;">New Dashboard &amp; Widget Designs</span>
<span class="t" style="top:507.22px;font-size:10px;left:788.00px;color:#3276b1;letter-spacing:0.013px;">Join the tawk.to iOS beta</span>
<span class="t" style="top:520.76px;font-size:10px;left:788.00px;color:#3276b1;letter-spacing:0.019px;">Scheduled Maintenance &ndash; 12th of July 2014</span>
<span class="t" style="top:534.31px;font-size:10px;left:788.00px;color:#3276b1;letter-spacing:0.096px;">Dashboard Update : May 08th 2014</span>
<span class="t" style="top:547.87px;font-size:10px;left:788.00px;color:#3276b1;letter-spacing:0.104px;">Dashboard Update : 08 April 2014</span>
<span class="t" style="top:561.41px;font-size:10px;left:788.00px;color:#3276b1;letter-spacing:0.093px;">Dashboard Update : 1 April 2014</span>
</body></html>
